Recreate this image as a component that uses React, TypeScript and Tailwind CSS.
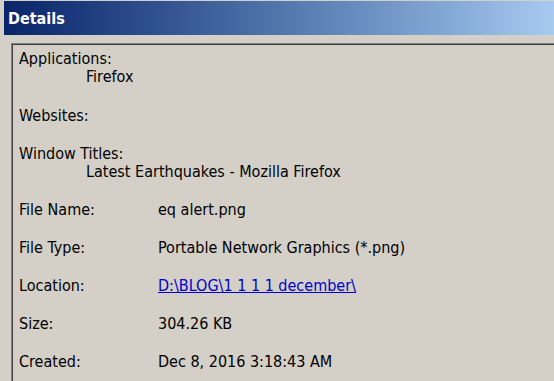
export default function App() {
  const rows = [
    { label: 'File Name:', value: 'eq alert.png' },
    { label: 'File Type:', value: 'Portable Network Graphics (*.png)' },
    { label: 'Location:', value: 'D:\\BLOG\\1 1 1 1 december\\', link: true },
    { label: 'Size:', value: '304.26 KB' },
    { label: 'Created:', value: 'Dec 8, 2016 3:18:43 AM' },
  ];

  return (
    <div
      className="h-[381px] w-[554px] overflow-hidden bg-[#d4d0c8] pt-px pl-1 text-[16px] text-black"
      style={{ fontFamily: 'Tahoma, "DejaVu Sans Condensed", "Liberation Sans", sans-serif' }}
    >
      {/* Title bar */}
      <div className="flex h-[34px] items-center bg-gradient-to-r from-[#0a246a] to-[#a6caf0] pl-1 pt-px">
        <span className="text-[16px] font-bold text-white">Details</span>
      </div>

      {/* Sunken panel */}
      <div className="mt-2 ml-[7px] border-t border-l border-[#808080]">
        <div className="h-[400px] border-t border-l border-[#404040] pl-[6px] pt-[5px] leading-[18px]">
          <div>Applications:</div>
          <div className="pl-[67px]">Firefox</div>
          <div className="mt-[21px]">Websites:</div>
          <div className="mt-[20px]">Window Titles:</div>
          <div className="pl-[67px]">Latest Earthquakes - Mozilla Firefox</div>

          <div className="mt-[20px] flex flex-col gap-[20px]">
            {rows.map((r) => (
              <div key={r.label} className="flex">
                <span className="w-[139px] shrink-0">{r.label}</span>
                {r.link ? (
                  <span className="text-[#0000cc] underline">{r.value}</span>
                ) : (
                  <span>{r.value}</span>
                )}
              </div>
            ))}
          </div>
        </div>
      </div>
    </div>
  );
}
